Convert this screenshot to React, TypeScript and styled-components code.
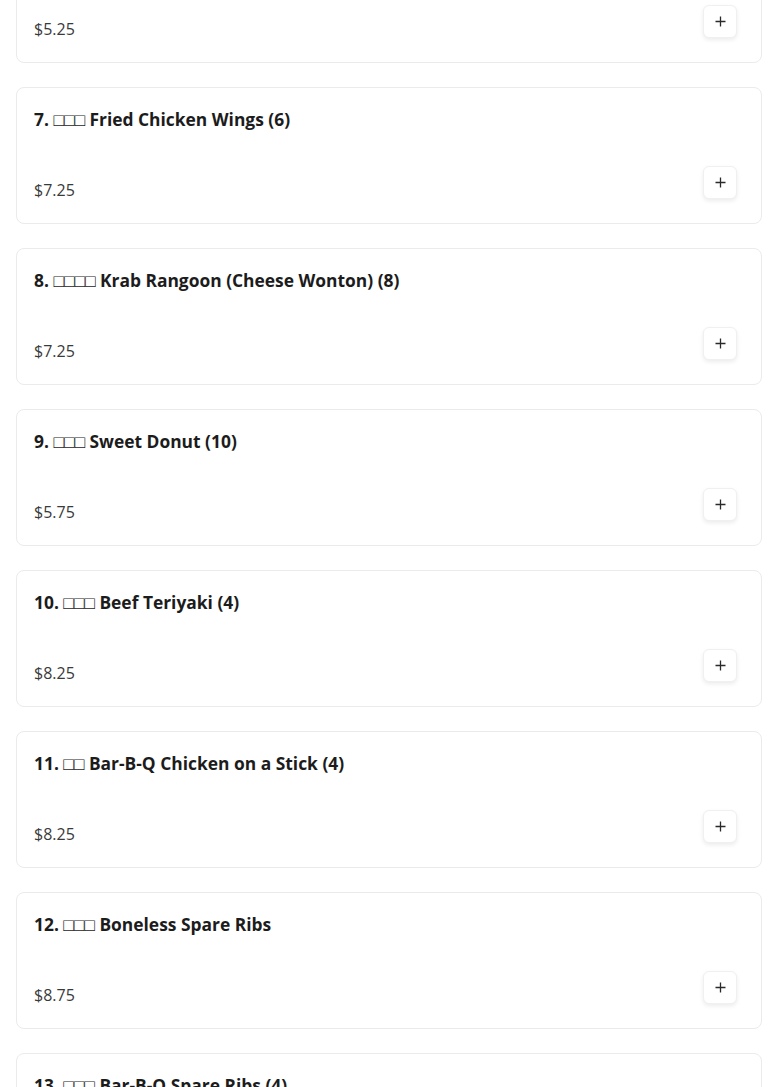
import styled, { createGlobalStyle } from "styled-components"

interface MenuItem {
    id: number
    name: string
    price: string
}

const items: MenuItem[] = [
    { id: 6, name: "6. □□□ Egg Rolls (4)", price: "$5.25" },
    { id: 7, name: "7. □□□ Fried Chicken Wings (6)", price: "$7.25" },
    { id: 8, name: "8. □□□□ Krab Rangoon (Cheese Wonton) (8)", price: "$7.25" },
    { id: 9, name: "9. □□□ Sweet Donut (10)", price: "$5.75" },
    { id: 10, name: "10. □□□ Beef Teriyaki (4)", price: "$8.25" },
    { id: 11, name: "11. □□ Bar-B-Q Chicken on a Stick (4)", price: "$8.25" },
    { id: 12, name: "12. □□□ Boneless Spare Ribs", price: "$8.75" },
    { id: 13, name: "13. □□□ Bar-B-Q Spare Ribs (4)", price: "$8.75" },
]

const GlobalStyle = createGlobalStyle`
    html, body {
        margin: 0;
        padding: 0;
        background: #ffffff;
        overflow: hidden;
    }
    body {
        font-family: "Open Sans", "Noto Sans", sans-serif;
        color: #1a1a1a;
    }
`

function PlusIcon() {
    return (
        <svg width="11" height="11" viewBox="0 0 11 11" aria-hidden>
            <path d="M5.5 0.5v10M0.5 5.5h10" stroke="#2a2a2a" strokeWidth="1.3" fill="none" />
        </svg>
    )
}

export default function App() {
    return (
        <>
            <GlobalStyle />
            <List aria-label="Menu">
                {items.map(item => (
                    <Card key={item.id}>
                        <Name>{item.name}</Name>
                        <Bottom>
                            <Price>{item.price}</Price>
                            <AddButton aria-label={`Add ${item.name}`}>
                                <PlusIcon />
                            </AddButton>
                        </Bottom>
                    </Card>
                ))}
            </List>
        </>
    )
}

const List = styled.main`
    display: flex;
    flex-direction: column;
    gap: 24px;
    padding: 0 16px;
    margin-top: -74px;
`

const Card = styled.article`
    box-sizing: border-box;
    height: 137px;
    border: 1px solid #ebebeb;
    border-radius: 8px;
    background: #fff;
    padding: 18px 24px 0 17px;
    display: flex;
    flex-direction: column;
`

const Name = styled.h3`
    margin: 0;
    font-size: 17.4px;
    font-weight: 700;
    line-height: 26px;
    color: #1c1c1c;
`

const Bottom = styled.div`
    display: flex;
    align-items: flex-start;
    justify-content: space-between;
    margin-top: 34px;
`

const Price = styled.span`
    font-size: 16px;
    font-weight: 400;
    color: #3a3a3a;
    line-height: 22px;
    margin-top: 13px;
`

const AddButton = styled.button`
    width: 34px;
    height: 33px;
    border: 1px solid #f0f0f0;
    border-radius: 6px;
    background: #fff;
    box-shadow: 0 2px 4px rgba(0, 0, 0, 0.08);
    display: flex;
    align-items: center;
    justify-content: center;
    padding: 0;
    cursor: pointer;
`
